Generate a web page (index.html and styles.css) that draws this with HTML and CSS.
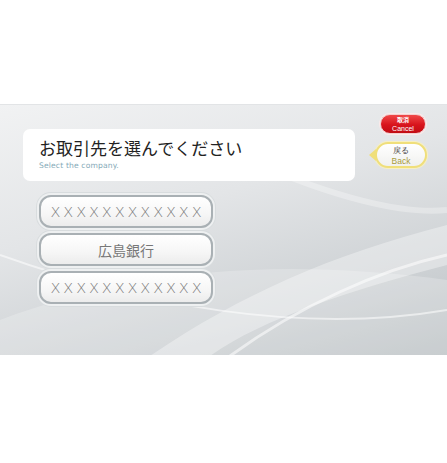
FILE: index.html
```
<!DOCTYPE html>
<html lang="ja">
<head>
<meta charset="utf-8">
<link rel="stylesheet" href="styles.css">
</head>
<body>
<div class="top-space"></div>
<main class="panel">
  <svg class="swoosh" viewBox="0 0 447 251" preserveAspectRatio="none">
    <path d="M0 215 C120 170 260 150 447 175 L447 251 L0 251 Z" fill="#ffffff" opacity="0.22"/>
    <path d="M150 251 C240 190 330 150 447 120 L447 160 C350 185 260 215 210 251 Z" fill="#ffffff" opacity="0.35"/>
    <path d="M0 150 C140 200 300 230 447 205" stroke="#ffffff" stroke-width="2" fill="none" opacity="0.55"/>
    <path d="M230 251 C300 200 380 165 447 150" stroke="#ffffff" stroke-width="3" fill="none" opacity="0.55"/>
    <path d="M260 60 C330 90 400 110 447 105" stroke="#ffffff" stroke-width="6" fill="none" opacity="0.3"/>
  </svg>
  <div class="head-row">
    <section class="title-card">
      <h1 class="title">お取引先を選んでください</h1>
      <p class="subtitle">Select the company.</p>
    </section>
    <div class="side">
      <button class="cancel"><span class="jp">取消</span><span class="en">Cancel</span></button>
      <button class="back"><span class="jp">戻る</span><span class="en">Back</span></button>
    </div>
  </div>
  <div class="list">
    <button class="item x">XXXXXXXXXXXX</button>
    <button class="item">広島銀行</button>
    <button class="item x">XXXXXXXXXXXX</button>
  </div>
</main>
</body>
</html>
```
FILE: styles.css
```
* { box-sizing: border-box; }
html, body { margin: 0; padding: 0; background: #ffffff; }
body { font-family: "Noto Sans CJK JP", "Noto Sans", sans-serif; width: 447px; height: 463px; overflow: hidden; }
.top-space { height: 104px; }
.panel {
  position: relative;
  height: 251px;
  background: linear-gradient(165deg, #f1f2f3 0%, #e3e5e7 40%, #cdd1d4 75%, #b9bfc2 100%);
  border-top: 1px solid #e2e4e6;
  overflow: hidden;
}
.swoosh { position: absolute; left: 0; top: 0; width: 447px; height: 251px; }
.head-row { position: relative; display: flex; align-items: flex-start; padding: 9px 0 0 23px; }
.title-card {
  margin-top: 15px;
  width: 332px;
  height: 52px;
  background: #fff;
  border-radius: 7px;
  padding: 6px 0 0 16px;
}
.title { margin: 0; font-size: 17px; font-weight: 400; color: #222; line-height: 26px; }
.subtitle { margin: 0; font-family: "DejaVu Sans", sans-serif; font-size: 7.6px; color: #86aab8; line-height: 10px; letter-spacing: 0.15px; }
.side { margin-left: 15px; display: flex; flex-direction: column; align-items: center; gap: 8px; width: 58px; }
.cancel {
  width: 46px; height: 20px; margin-left: 8px;
  border-radius: 10px;
  border: 1px solid #f2d0d0;
  background: linear-gradient(#f04848, #d8141c 55%, #c10c14);
  box-shadow: 0 0 0 1px #fbeaea;
  color: #fff;
  display: flex; flex-direction: column; align-items: center; justify-content: center;
  padding: 0; font-family: "Noto Sans CJK JP", sans-serif;
}
.cancel .jp { font-size: 6px; font-weight: 700; line-height: 9px; }
.cancel .en { font-family: "Liberation Sans", sans-serif; font-size: 7px; line-height: 9px; }
.back {
  position: relative;
  width: 52px; height: 26px; margin-left: 4px;
  border-radius: 13px;
  border: 2px solid #f0df7a;
  background: linear-gradient(#ffffff, #f1f1ef);
  box-shadow: 0 0 0 1px #f8f0c0;
  padding: 0;
  display: flex; flex-direction: column; align-items: center; justify-content: center;
}
.back::before {
  content: ""; position: absolute; left: -8px; top: 5px;
  width: 0; height: 0;
  border-top: 6px solid transparent; border-bottom: 6px solid transparent;
  border-right: 7px solid #f0df7a;
}
.back .jp { font-size: 7.5px; color: #444; line-height: 11px; }
.back .en { font-family: "Liberation Sans", sans-serif; font-size: 8.5px; color: #a89c3c; line-height: 10px; }
.list { position: relative; display: flex; flex-direction: column; gap: 5px; margin: 14px 0 0 39px; }
.item {
  width: 174px; height: 33px;
  border-radius: 12px;
  border: 2px solid #a9b0b4;
  box-shadow: 0 0 0 2px #eef0f1, 0 0 0 3px #d8dcde;
  background: linear-gradient(#ffffff, #f6f6f6 60%, #ececec);
  color: #777;
  font-family: "Noto Sans CJK JP", sans-serif;
  font-size: 14px; font-weight: 400;
  padding: 0;
}
.item.x { font-family: "DejaVu Sans", sans-serif; font-weight: 200; font-size: 14.5px; letter-spacing: 2.9px; text-indent: 3px; color: #7a7a7a; }
```
